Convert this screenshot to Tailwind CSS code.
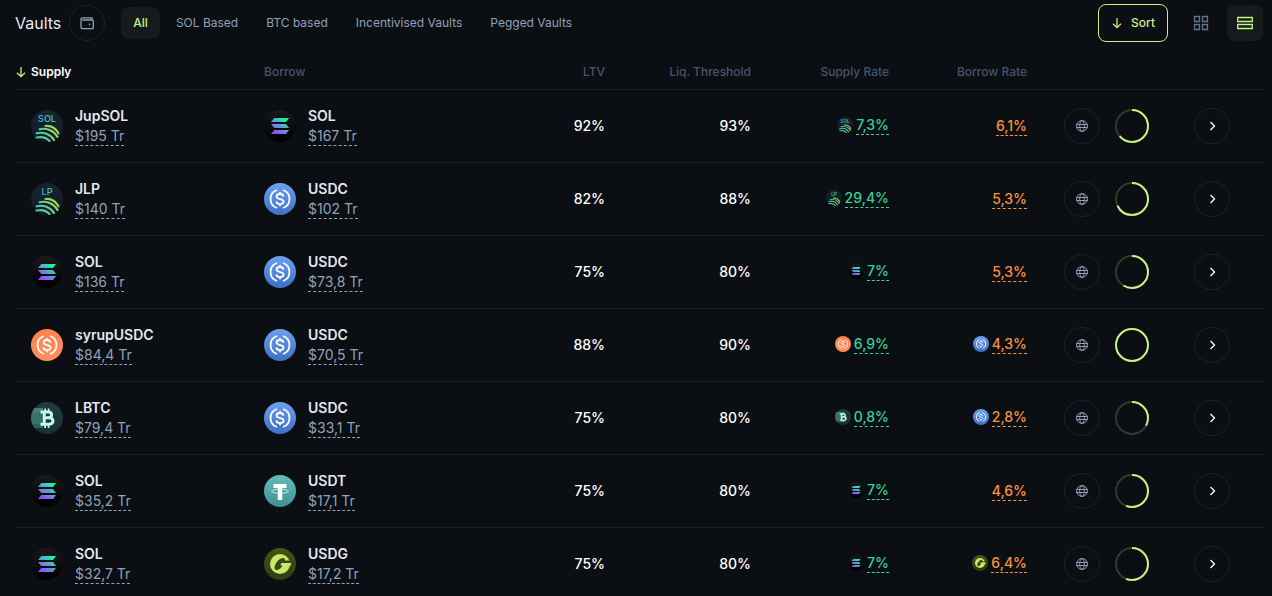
<!DOCTYPE html>
<html lang="en">

<head>
    <meta charset="UTF-8">
    <meta name="viewport" content="width=device-width, initial-scale=1.0">
    <title>Vaults</title>
    <script src="https://cdn.jsdelivr.net/npm/@tailwindcss/browser@4"></script>
</head>

<body class="bg-[#0b0e13] font-['Inter',sans-serif] text-slate-200">

    <!-- Token logos and icons -->
    <svg class="absolute h-0 w-0" aria-hidden="true">
        <defs>
            <linearGradient id="g-jup" gradientUnits="userSpaceOnUse" x1="6" y1="29" x2="26" y2="15">
                <stop offset="0" stop-color="#35c4b8" />
                <stop offset="0.5" stop-color="#6fcf86" />
                <stop offset="1" stop-color="#c0dc3c" />
            </linearGradient>
            <linearGradient id="g-juptext" x1="0" y1="0" x2="1" y2="0">
                <stop offset="0" stop-color="#22b8cf" />
                <stop offset="1" stop-color="#6fd3a0" />
            </linearGradient>
            <linearGradient id="g-jupbg" x1="0" y1="0" x2="0" y2="1">
                <stop offset="0" stop-color="#152430" />
                <stop offset="1" stop-color="#101c28" />
            </linearGradient>
            <linearGradient id="g-solbg" x1="0" y1="0" x2="0" y2="1">
                <stop offset="0" stop-color="#1a1a1a" />
                <stop offset="1" stop-color="#000000" />
            </linearGradient>
            <linearGradient id="g-sol" gradientUnits="userSpaceOnUse" x1="9" y1="25" x2="23" y2="7">
                <stop offset="0.1" stop-color="#9945ff" />
                <stop offset="0.5" stop-color="#5a9bd8" />
                <stop offset="0.9" stop-color="#19fb9b" />
            </linearGradient>
            <linearGradient id="g-usdc" x1="0" y1="0" x2="0" y2="1">
                <stop offset="0" stop-color="#6ba1f0" />
                <stop offset="1" stop-color="#3e70c4" />
            </linearGradient>
            <linearGradient id="g-syrup" x1="0" y1="0" x2="0" y2="1">
                <stop offset="0" stop-color="#ff8149" />
                <stop offset="1" stop-color="#ff9060" />
            </linearGradient>
            <linearGradient id="g-lbtc" x1="0" y1="0" x2="0" y2="1">
                <stop offset="0" stop-color="#203c3d" />
                <stop offset="1" stop-color="#1a3032" />
            </linearGradient>
            <linearGradient id="g-usdt" x1="0" y1="0" x2="0" y2="1">
                <stop offset="0" stop-color="#64bcbd" />
                <stop offset="1" stop-color="#3f9090" />
            </linearGradient>
            <linearGradient id="g-usdg" x1="0" y1="0" x2="0" y2="1">
                <stop offset="0" stop-color="#435518" />
                <stop offset="1" stop-color="#2e3c10" />
            </linearGradient>
            <clipPath id="c-round">
                <circle cx="16" cy="16" r="16" />
            </clipPath>
        </defs>
        <symbol id="t-jup" viewBox="0 0 32 32">
            <circle cx="16" cy="16" r="16" fill="url(#g-jupbg)" />
            <g fill="none" stroke="url(#g-jup)" stroke-width="2.1" stroke-linecap="round">
                <path d="M14.500 16c5-.6 9.800 1.800 13 7.300" />
                <path d="M8.500 19.300c6.500-1.600 14.300.9 18 7.700" />
                <path d="M5.500 23.300c6.500-1.600 14 .4 17.500 6.700" />
                <path d="M5.500 27.500c5-1 10 0 13 3.500" />
            </g>
        </symbol>
        <symbol id="t-sol" viewBox="0 0 32 32">
            <circle cx="16" cy="16" r="16" fill="url(#g-solbg)" />
            <path fill="url(#g-sol)" d="M10.300 8H25l-3 4H7zM7 14h15l3 4H10.300zM10.300 20H25l-3 4H7z" />
        </symbol>
        <symbol id="t-coin" viewBox="0 0 32 32">
            <g fill="none" stroke="#fff" stroke-width="1.8">
                <path d="M13 7a9.500 9.500 0 0 0 0 18M19 7a9.500 9.500 0 0 1 0 18" />
                <path d="M19.400 13.600c-.2-1.700-1.500-2.600-3.400-2.600-2 0-3.400.9-3.400 2.500 0 3.500 7 1.500 7 5.100 0 1.600-1.500 2.500-3.600 2.500s-3.500-.9-3.600-2.700M16 9v2.200M16 21v2.200" />
            </g>
        </symbol>
        <symbol id="t-usdc" viewBox="0 0 32 32">
            <circle cx="16" cy="16" r="16" fill="url(#g-usdc)" />
            <use href="#t-coin" width="32" height="32" />
        </symbol>
        <symbol id="t-syrup" viewBox="0 0 32 32">
            <circle cx="16" cy="16" r="16" fill="url(#g-syrup)" />
            <use href="#t-coin" width="32" height="32" />
        </symbol>
        <symbol id="t-lbtc" viewBox="0 0 32 32">
            <circle cx="16" cy="16" r="16" fill="url(#g-lbtc)" />
            <g clip-path="url(#c-round)">
                <path fill="#467f79" d="M0 6h12v4H0z" />
                <path fill="#39706b" d="M0 10h12v12H0z" />
                <path fill="#315f5b" d="M0 22h12v4H0z" />
            </g>
            <g fill="none" stroke="#c4fbef" stroke-width="2.9">
                <path d="M9.500 10H17c4.800 0 4.800 5.800 0 5.800h-3 4c5.300 0 5.300 6.400 0 6.400H9.500M13.300 10v12" />
                <path stroke-width="1.700" d="M14.200 6.500v3M17.600 6.500v3M14.200 23v3M17.600 23v3" />
            </g>
        </symbol>
        <symbol id="t-usdt" viewBox="0 0 32 32">
            <circle cx="16" cy="16" r="16" fill="url(#g-usdt)" />
            <path fill="#fff" d="M9.500 9h13v4h-4.300v12h-4.400V13H9.500z" />
            <ellipse cx="16" cy="16.300" rx="8.300" ry="2" fill="none" stroke="#d8f0ef" stroke-width="0.900" />
        </symbol>
        <symbol id="t-usdg" viewBox="0 0 32 32">
            <circle cx="16" cy="16" r="16" fill="url(#g-usdg)" />
            <circle cx="16" cy="16" r="10" fill="#cbe76c" />
            <ellipse cx="15.800" cy="16" rx="3.600" ry="7.200" transform="rotate(38 15.800 16)" fill="#38481a" />
            <path fill="#38481a" d="M19 12.500h8V15h-8z" />
            <path fill="#cbe76c" d="M17.500 15H27v2.500h-4l-3 4-3.500-1 2.200-3h-2.400z" />
        </symbol>
        <symbol id="i-down" viewBox="0 0 12 12">
            <path fill="none" stroke="currentColor" stroke-width="1.300" d="M6 1v9.500M2 6.700l4 4 4-4" />
        </symbol>
        <symbol id="i-globe" viewBox="0 0 12 12">
            <g fill="none" stroke="currentColor">
                <circle cx="6" cy="6" r="5.400" />
                <ellipse cx="6" cy="6" rx="2.300" ry="5.400" stroke-width="0.900" />
                <path d="M.5 4.500h11M.5 7.500h11" />
            </g>
        </symbol>
        <symbol id="i-next" viewBox="0 0 12 12">
            <path fill="none" stroke="currentColor" stroke-width="1.300" d="M4.500 2l4 4-4 4" />
        </symbol>
    </svg>

    <header class="flex items-center justify-between pt-1 pr-[9px] pl-[15px]">
        <div class="flex items-center gap-4">
            <div class="flex items-center gap-2">
                <h1 class="text-base">Vaults</h1>
                <button type="button" aria-label="Wallet"
                    class="flex size-9 items-center justify-center rounded-full border border-[#19222c] text-slate-400">
                    <svg class="size-4" viewBox="0 0 16 16" fill="none" stroke="currentColor" stroke-width="1.300">
                        <path d="M13 4.700V2.800H3.300a1.300 1.300 0 0 0-1.300 1.300V12a1.700 1.700 0 0 0 1.700 1.700h9.600a1 1 0 0 0 1-1V6a1 1 0 0 0-1-1H3.300" />
                        <path d="M10.500 8.500v1.700" />
                    </svg>
                </button>
            </div>
            <nav class="flex items-center gap-1 text-xs text-slate-400">
                <button type="button" class="h-8 rounded-lg bg-[#151b1b] px-3 font-medium text-[#c7f284]">All</button>
                <button type="button" class="h-8 px-3">SOL Based</button>
                <button type="button" class="h-8 px-3">BTC based</button>
                <button type="button" class="h-8 px-3">Incentivised Vaults</button>
                <button type="button" class="h-8 px-3">Pegged Vaults</button>
            </nav>
        </div>
        <div class="flex items-center gap-2">
            <button type="button"
                class="mr-[7px] flex h-[38px] items-center gap-2 rounded-lg border border-[#c7f284] px-3 text-xs font-medium text-[#c7f284]">
                <svg class="size-3"><use href="#i-down" /></svg>
                Sort
            </button>
            <button type="button" aria-label="Grid view" class="flex size-9 items-center justify-center text-slate-500">
                <svg class="size-4" viewBox="0 0 16 16" fill="none" stroke="currentColor" stroke-width="1.300">
                    <path d="M1.500 1.500h5v5h-5zM9.500 1.500h5v5h-5zM1.500 9.500h5v5h-5zM9.500 9.500h5v5h-5z" />
                </svg>
            </button>
            <button type="button" aria-label="List view"
                class="flex size-9 items-center justify-center rounded-lg bg-[#151b1b] text-[#c7f284]">
                <svg class="size-4" viewBox="0 0 16 16" fill="none" stroke="currentColor" stroke-width="1.300">
                    <path d="M.7 2.500h14.600v4H.7zM.7 9.500h14.600v4H.7z" />
                </svg>
            </button>
        </div>
    </header>

    <main class="pt-3.5 pr-[9px] pl-[15px]">
        <table class="w-full table-fixed">
            <thead>
                <tr class="h-[33px] border-b border-[#1a222c] text-xs text-slate-600">
                    <th class="w-[249px] text-left">
                        <button type="button" class="flex items-center gap-1 font-semibold text-white">
                            <svg class="size-3 text-[#c7f284]"><use href="#i-down" /></svg>
                            Supply
                        </button>
                    </th>
                    <th class="text-left font-medium">Borrow</th>
                    <th class="w-[146px] text-right font-medium">LTV</th>
                    <th class="w-[146px] text-right font-medium">Liq. Threshold</th>
                    <th class="w-[138px] text-right font-medium">Supply Rate</th>
                    <th class="w-[138px] text-right font-medium">Borrow Rate</th>
                    <th class="w-[236px]"></th>
                </tr>
            </thead>
            <tbody id="vaults" class="text-sm"></tbody>
        </table>
    </main>

    <script>
        // supply, borrow: [logo, name, amount, logo text]; rates: [value, logo, logo text]
        const vaults = [
            { supply: ['jup', 'JupSOL', '$195 Tr', 'SOL'], borrow: ['sol', 'SOL', '$167 Tr'], ltv: '92%', liq: '93%', supplyRate: ['7,3%', 'jup', 'SOL'], borrowRate: ['6,1%'], used: 64 },
            { supply: ['jup', 'JLP', '$140 Tr', 'LP'], borrow: ['usdc', 'USDC', '$102 Tr'], ltv: '82%', liq: '88%', supplyRate: ['29,4%', 'jup', 'LP'], borrowRate: ['5,3%'], used: 68 },
            { supply: ['sol', 'SOL', '$136 Tr'], borrow: ['usdc', 'USDC', '$73,8 Tr'], ltv: '75%', liq: '80%', supplyRate: ['7%', 'sol'], borrowRate: ['5,3%'], used: 59 },
            { supply: ['syrup', 'syrupUSDC', '$84,4 Tr'], borrow: ['usdc', 'USDC', '$70,5 Tr'], ltv: '88%', liq: '90%', supplyRate: ['6,9%', 'syrup'], borrowRate: ['4,3%', 'usdc'], used: 100 },
            { supply: ['lbtc', 'LBTC', '$79,4 Tr'], borrow: ['usdc', 'USDC', '$33,1 Tr'], ltv: '75%', liq: '80%', supplyRate: ['0,8%', 'lbtc'], borrowRate: ['2,8%', 'usdc'], used: 33 },
            { supply: ['sol', 'SOL', '$35,2 Tr'], borrow: ['usdt', 'USDT', '$17,1 Tr'], ltv: '75%', liq: '80%', supplyRate: ['7%', 'sol'], borrowRate: ['4,6%'], used: 56 },
            { supply: ['sol', 'SOL', '$32,7 Tr'], borrow: ['usdg', 'USDG', '$17,2 Tr'], ltv: '75%', liq: '80%', supplyRate: ['7%', 'sol'], borrowRate: ['6,4%', 'usdg'], used: 56 },
        ];

        function logo(id, label, size) {
            const text = label ? `<text x="16" y="12" text-anchor="middle" font-size="9" font-weight="500" fill="url(#g-juptext)">${label}</text>` : '';
            return `<svg class="${size} shrink-0" viewBox="0 0 32 32"><use href="#t-${id}" width="32" height="32" />${text}</svg>`;
        }

        function token([id, name, amount, label]) {
            return `
                <div class="flex items-center gap-3">
                    ${logo(id, label, 'size-8')}
                    <div class="flex flex-col items-start">
                        <span class="font-semibold leading-5">${name}</span>
                        <span class="border-b border-dashed border-slate-400 leading-[19px] text-slate-400">${amount}</span>
                    </div>
                </div>`;
        }

        function rate([value, id, label], color) {
            return `
                <div class="flex items-center justify-end gap-[3px] ${id ? 'pb-0.5' : ''}">
                    ${id ? logo(id, label, 'size-4') : ''}
                    <span class="border-b border-dashed font-medium leading-[19px] ${color}">${value}</span>
                </div>`;
        }

        document.getElementById('vaults').innerHTML = vaults.map(v => `
            <tr class="h-[73px] border-b border-[#1a222c]">
                <td class="pl-4">${token(v.supply)}</td>
                <td>${token(v.borrow)}</td>
                <td class="text-right font-medium text-white">${v.ltv}</td>
                <td class="text-right font-medium text-white">${v.liq}</td>
                <td>${rate(v.supplyRate, 'border-[#34d399] text-[#34d399]')}</td>
                <td>${rate(v.borrowRate, 'border-[#fb923c] text-[#fb923c]')}</td>
                <td>
                    <div class="flex items-center justify-end pr-[33px]">
                        <button type="button" aria-label="Network" class="flex size-9 items-center justify-center rounded-full border border-[#1c232e] text-slate-400">
                            <svg class="size-3"><use href="#i-globe" /></svg>
                        </button>
                        <svg class="mr-11 ml-[14px] size-9 -rotate-90" viewBox="0 0 36 36" fill="none" stroke="#c7f284" stroke-width="2">
                            <circle cx="18" cy="18" r="16" stroke-opacity="0.2" />
                            <circle cx="18" cy="18" r="16" pathLength="100" stroke-dasharray="${v.used} 100" />
                        </svg>
                        <button type="button" aria-label="Open vault" class="flex size-9 items-center justify-center rounded-full border border-[#1c232e] text-white">
                            <svg class="size-3"><use href="#i-next" /></svg>
                        </button>
                    </div>
                </td>
            </tr>`).join('');
    </script>
</body>

</html>
